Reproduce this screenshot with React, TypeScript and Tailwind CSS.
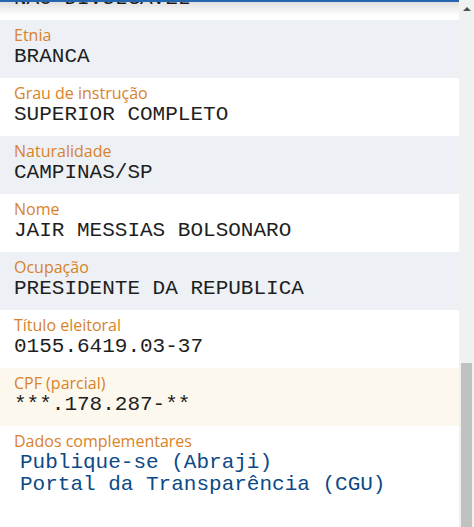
import React from "react";

type Row = { label: string; value?: string; bg: string; links?: string[] };

const rows: Row[] = [
  { label: "Cor/raça", value: "NÃO DIVULGÁVEL", bg: "bg-white" },
  { label: "Etnia", value: "BRANCA", bg: "bg-[#edf1f5]" },
  { label: "Grau de instrução", value: "SUPERIOR COMPLETO", bg: "bg-white" },
  { label: "Naturalidade", value: "CAMPINAS/SP", bg: "bg-[#edf1f5]" },
  { label: "Nome", value: "JAIR MESSIAS BOLSONARO", bg: "bg-white" },
  { label: "Ocupação", value: "PRESIDENTE DA REPUBLICA", bg: "bg-[#edf1f5]" },
  { label: "Título eleitoral", value: "0155.6419.03-37", bg: "bg-white" },
  { label: "CPF (parcial)", value: "***.178.287-**", bg: "bg-[#fdf8ee]" },
  {
    label: "Dados complementares",
    bg: "bg-white",
    links: ["Publique-se (Abraji)", "Portal da Transparência (CGU)"],
  },
];

export default function App() {
  return (
    <div className="relative flex w-[474px] h-[527px] overflow-hidden bg-white">
      <div className="flex-1 min-w-0 overflow-hidden">
        <div className="-mt-[38px] flex flex-col">
          {rows.map((r) => (
            <div key={r.label} className={`${r.bg} h-[58px] pl-[14px] pt-[5px]`}>
              <div
                className="text-[16px] leading-[20px] text-[#d8822a]"
                style={{ fontFamily: '"Open Sans", "Noto Sans", sans-serif' }}
              >
                {r.label}
              </div>
              {r.value && (
                <div
                  className="text-[21px] leading-[24px] text-[#1e1e1e] whitespace-pre"
                  style={{ fontFamily: '"Liberation Mono", monospace' }}
                >
                  {r.value}
                </div>
              )}
              {r.links && (
                <ul className="pl-[6px] pt-[1px]">
                  {r.links.map((l) => (
                    <li
                      key={l}
                      className="text-[21px] leading-[22px] text-[#0b4a85] whitespace-pre"
                      style={{ fontFamily: '"Liberation Mono", monospace' }}
                    >
                      {l}
                    </li>
                  ))}
                </ul>
              )}
            </div>
          ))}
        </div>
      </div>
      <div className="w-[15px] h-full bg-[#f1f1f1] flex flex-col items-center shrink-0">
        <div className="pt-[7px] h-[363px]">
          <div className="w-0 h-0 border-l-[4px] border-r-[4px] border-b-[4px] border-l-transparent border-r-transparent border-b-[#505050]" />
        </div>
        <div className="w-[11px] flex-1 bg-[#c1c1c1]" />
      </div>
      <div className="absolute top-0 left-0 w-[459px] h-[16px] pointer-events-none">
        <div className="h-[2px] bg-[#2466ad]" />
        <div className="h-[14px] bg-gradient-to-b from-[rgba(0,0,0,0.12)] to-transparent" />
      </div>
    </div>
  );
}
